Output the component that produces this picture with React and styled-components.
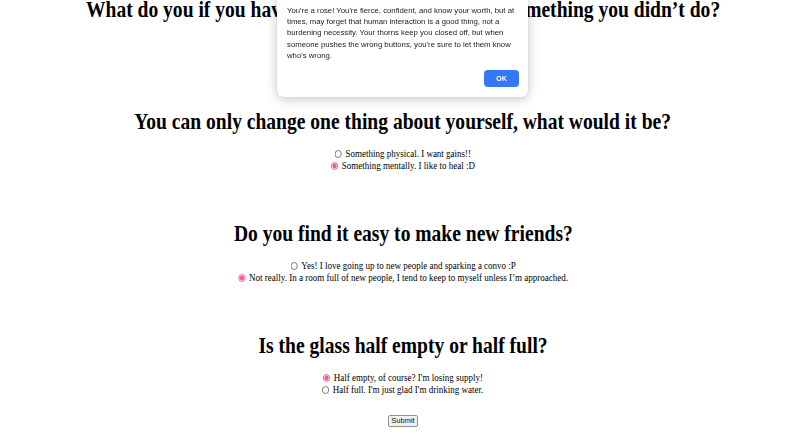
import React from "react";
import styled, { createGlobalStyle } from "styled-components";

const GlobalStyle = createGlobalStyle`
  html, body {
    margin: 0;
    padding: 0;
    background: #fff;
  }
  body {
    font-family: "Liberation Serif", "Times New Roman", serif;
    color: #000;
    overflow: hidden;
  }
`;

const questions = [
  {
    title: "What do you if you have been wrongly blamed for something you didn\u2019t do?",
    answers: [
      "I stand my ground until they admit their own mistakes.",
      "I let it slide, it happens.",
    ],
    picked: 0,
  },
  {
    title: "You can only change one thing about yourself, what would it be?",
    answers: ["Something physical. I want gains!!", "Something mentally. I like to heal :D"],
    picked: 1,
  },
  {
    title: "Do you find it easy to make new friends?",
    answers: [
      "Yes! I love going up to new people and sparking a convo :P",
      "Not really. In a room full of new people, I tend to keep to myself unless I\u2019m approached.",
    ],
    picked: 1,
  },
  {
    title: "Is the glass half empty or half full?",
    answers: ["Half empty, of course? I'm losing supply!", "Half full. I'm just glad I'm drinking water."],
    picked: 0,
  },
];

function App() {
  return (
    <>
      <GlobalStyle />
      <Quiz>
        {questions.map((q, i) => (
          <Question key={i}>
            <Title>{q.title}</Title>
            <Answers>
              {q.answers.map((a, j) => (
                <Answer key={j}>
                  <Radio type="radio" name={"q" + i} defaultChecked={q.picked === j} />
                  <AnswerText>{a}</AnswerText>
                </Answer>
              ))}
            </Answers>
          </Question>
        ))}
        <Submit type="button">Submit</Submit>
      </Quiz>

      <Alert>
        <AlertText>
          You're a rose! You're fierce, confident, and know your worth, but at times, may forget
          that human interaction is a good thing, not a burdening necessity. Your thorns keep you
          closed off, but when someone pushes the wrong buttons, you're sure to let them know
          who's wrong.
        </AlertText>
        <AlertActions>
          <OkButton type="button">OK</OkButton>
        </AlertActions>
      </Alert>
    </>
  );
}

const Quiz = styled.form`
  display: flex;
  flex-direction: column;
  align-items: center;
  margin-top: -3px;
`;

const Question = styled.section`
  display: flex;
  flex-direction: column;
  align-items: center;

  & + & {
    margin-top: 49px;
  }
`;

const Title = styled.h1`
  margin: 0;
  font-size: 23px;
  line-height: 26px;
  font-weight: 700;
  text-align: center;
  white-space: nowrap;
  transform: scaleX(0.85);
`;

const Answers = styled.div`
  margin-top: 13px;
  display: flex;
  flex-direction: column;
  align-items: center;
`;

const Answer = styled.label`
  display: flex;
  align-items: center;
  font-size: 10px;
  line-height: 12px;
  white-space: nowrap;
  transform: scaleX(0.9);
`;

const AnswerText = styled.span`
  margin-left: 4px;
`;

const Radio = styled.input`
  margin: 0;
  width: 8px;
  height: 8px;
  accent-color: #e8609a;
`;

const Submit = styled.button`
  margin-top: 19px;
  width: 30px;
  height: 12px;
  padding: 0;
  font-family: "Liberation Sans", Arial, sans-serif;
  font-size: 7.5px;
  line-height: 10px;
  color: #111;
  background: #f2f2f2;
  border: 1px solid #8f8f8f;
  border-radius: 2px;
`;

const Alert = styled.div`
  position: fixed;
  top: -6px;
  left: 277px;
  width: 251px;
  box-sizing: border-box;
  padding: 11px 9px 10px 10px;
  background: #fff;
  border-radius: 6px;
  box-shadow: 0 2px 12px rgba(0, 0, 0, 0.22), 0 0 1px rgba(0, 0, 0, 0.25);
  font-family: "Liberation Sans", Arial, sans-serif;
`;

const AlertText = styled.p`
  margin: 0;
  font-size: 7.75px;
  line-height: 11.2px;
  color: #222;
`;

const AlertActions = styled.div`
  display: flex;
  justify-content: flex-end;
  margin-top: 9px;
`;

const OkButton = styled.button`
  width: 35px;
  height: 17px;
  padding: 0;
  border: none;
  border-radius: 4px;
  background: #3478f6;
  color: #fff;
  font-family: "Liberation Sans", Arial, sans-serif;
  font-size: 7px;
  font-weight: 600;
`;

export default App;
